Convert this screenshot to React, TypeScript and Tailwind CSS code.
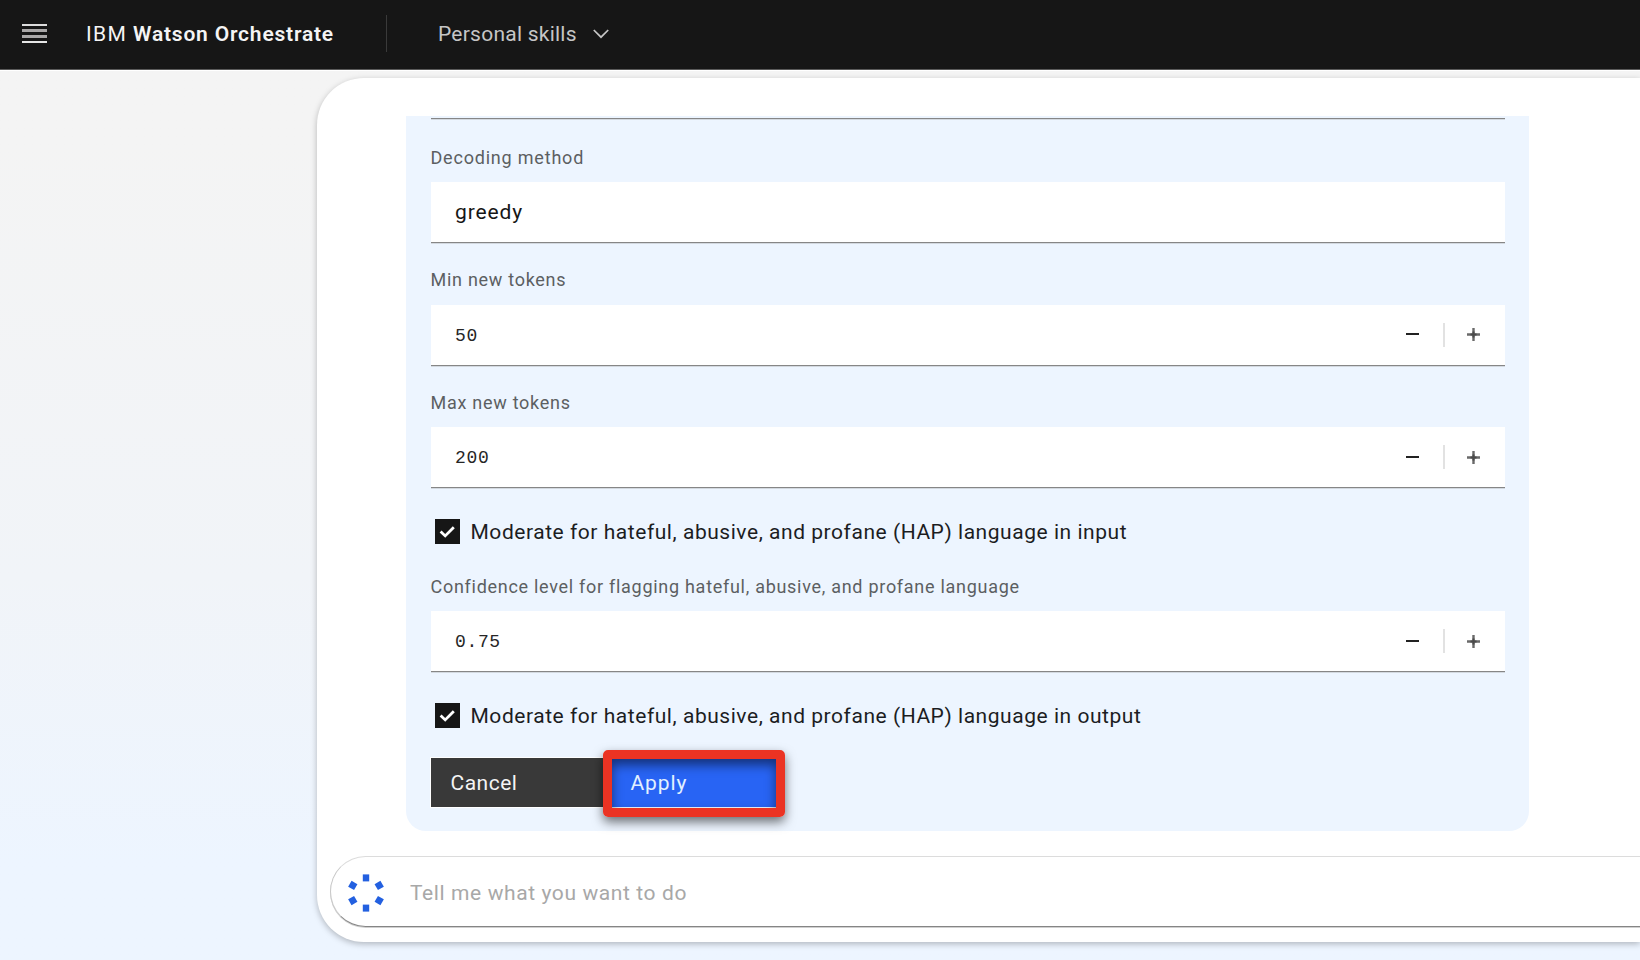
import React from "react";

function Field({
  label,
  spacing,
  children,
}: {
  label: string;
  spacing: string;
  children: React.ReactNode;
}) {
  return (
    <div className="flex h-[122.6px] flex-col">
      <label
        className={`flex flex-1 items-end pb-[12.3px] text-[18px] leading-6 text-[#5c5f62] ${spacing}`}
      >
        {label}
      </label>
      <div className="flex h-[61px] items-center border-b border-[#868686] bg-white pl-[24.5px] shadow-[0_1px_0_#d3d9e0]">
        {children}
      </div>
    </div>
  );
}

function NumberField({ label, spacing, value }: { label: string; spacing: string; value: string }) {
  return (
    <Field label={label} spacing={spacing}>
      <span className="flex-1 pt-[2px] font-['Liberation_Mono',monospace] text-[18px] leading-6 tracking-[0.65px] text-[#262626]">
        {value}
      </span>
      <button className="flex h-full w-[61px] items-center justify-center" aria-label="Decrease">
        <svg width="13" height="13" viewBox="0 0 13 13">
          <path d="M0 6h13" stroke="#222" strokeWidth="2" />
        </svg>
      </button>
      <span className="h-6 w-[2px] bg-[#e2e2e2]" />
      <button className="flex h-full w-[60px] items-center justify-center pr-[2px]" aria-label="Increase">
        <svg width="13" height="13" viewBox="0 0 13 13">
          <path d="M0 6.5h13M6.5 0v13" stroke="#6a6a6a" strokeWidth="2.4" />
          <path d="M3.5 6.5h6M6.5 3.5v6" stroke="#4a4a4a" strokeWidth="2" />
        </svg>
      </button>
    </Field>
  );
}

function CheckRow({ label }: { label: string }) {
  return (
    <div className="flex h-[61.3px] items-end pb-[5.5px] pl-1">
      <div className="flex items-center">
        <span className="flex size-[25px] items-center justify-center bg-[#161616]">
          <svg width="25" height="25" viewBox="0 0 25 25" fill="none">
            <path d="M5.6 12.6l4.6 4.3 8.6-8.6" stroke="#fff" strokeWidth="2.8" />
          </svg>
        </span>
        <span className="ml-[11px] pt-px text-[21px] leading-6 tracking-[0.54px] whitespace-nowrap text-[#1c1d1f]">
          {label}
        </span>
      </div>
    </div>
  );
}

function Header() {
  return (
    <header className="flex h-[70px] shrink-0 items-center border-b border-[#5a5a5a] bg-[#161616] shadow-[0_1px_0_#fff]">
      <button className="ml-[22px] mb-[2px] flex h-[19px] w-[25px] flex-col justify-between" aria-label="Menu">
        <span className="h-[2px] w-full bg-[#dcdcdc]" />
        <span className="h-[3px] w-full bg-[#a9a7a7]" />
        <span className="h-[3px] w-full bg-[#a9a7a7]" />
        <span className="h-[2px] w-full bg-[#e6e6e6]" />
      </button>
      <div className="ml-[39px] flex w-[300px] items-center pb-[2px] text-[21px] leading-6 text-[#f4f4f4]">
        <span className="w-[47px] tracking-[1.3px]">IBM</span>
        <span className="font-semibold tracking-[0.8px]">Watson Orchestrate</span>
      </div>
      <div className="mt-[15px] h-[37px] w-px self-start bg-[#3a3a3a]" />
      <button className="ml-[51px] flex items-center pb-[2px] text-[21px] leading-6 text-[#c6c6c6]">
        <span className="w-[155px] text-left tracking-[0.24px]">Personal skills</span>
        <svg width="16" height="10" viewBox="0 0 16 10" fill="none">
          <path d="M0.8 1l7.2 7.2L15.2 1" stroke="#c6c6c6" strokeWidth="1.7" />
        </svg>
      </button>
    </header>
  );
}

function Prompt() {
  return (
    <div className="mt-[25px] ml-[13px] flex h-[71px] shrink-0 items-center rounded-l-[36px] border-y border-l border-t-[#dcdcdc] border-b-[#858585] border-l-[#c8c8c8] bg-white shadow-[0_1px_0_#d0d0d0]">
      <svg className="mt-[3px] ml-[17px]" width="36" height="38" viewBox="-18 -19 36 38" fill="#2360e0">
        <rect x="-3.2" y="-18.6" width="6.4" height="7" />
        <rect x="-3.2" y="11.6" width="6.4" height="7" />
        <rect x="-3.4" y="-3.4" width="6.8" height="6.8" transform="translate(-13.2 -7.6) rotate(30)" />
        <rect x="-3.4" y="-3.4" width="6.8" height="6.8" transform="translate(13.2 -7.6) rotate(-30)" />
        <rect x="-3.4" y="-3.4" width="6.8" height="6.8" transform="translate(-13.2 7.6) rotate(-30)" />
        <rect x="-3.4" y="-3.4" width="6.8" height="6.8" transform="translate(13.2 7.6) rotate(30)" />
      </svg>
      <span className="ml-[26px] pt-[3px] text-[21px] leading-6 tracking-[0.6px] text-[#a8a8a8]">
        Tell me what you want to do
      </span>
    </div>
  );
}

export default function App() {
  return (
    <div className="flex h-[960px] w-[1640px] flex-col overflow-hidden bg-linear-to-b from-[#f4f4f4] from-15% via-[#f1f4f8] via-60% to-[#edf5ff] to-90% font-['Roboto',sans-serif]">
      <Header />
      <main className="mt-2 ml-[317px] flex h-[864px] flex-col rounded-l-[47px] bg-white pt-[38px] shadow-[0_2px_6px_rgba(0,0,0,0.26)]">
        <section className="ml-[89px] flex h-[715px] w-[1123px] shrink-0 flex-col rounded-b-[20px] bg-[#edf5ff] px-[24.5px]">
          <div className="mb-[1.5px] h-[3px] shrink-0 border-b border-[#868686] shadow-[0_1px_0_#d3d9e0]" />
          <Field label="Decoding method" spacing="tracking-[0.8px]">
            <span className="text-[21px] leading-6 tracking-[0.9px] text-[#161616]">greedy</span>
          </Field>
          <NumberField label="Min new tokens" spacing="tracking-[0.72px]" value="50" />
          <NumberField label="Max new tokens" spacing="tracking-[0.72px]" value="200" />
          <CheckRow label="Moderate for hateful, abusive, and profane (HAP) language in input" />
          <NumberField
            label="Confidence level for flagging hateful, abusive, and profane language"
            spacing="tracking-[0.715px]"
            value="0.75"
          />
          <CheckRow label="Moderate for hateful, abusive, and profane (HAP) language in output" />
          <div className="mt-[25px] flex h-[49px] text-[21px] leading-6">
            <button className="flex w-[177px] items-center bg-[#393939] pl-5 tracking-[0.5px] text-[#f4f4f4] shadow-[0_0_0_1px_#fff]">
              Cancel
            </button>
            <button className="relative flex w-[172px] items-center bg-[#2864f4] pl-[23px] tracking-[0.9px] text-[#e2f1ff]">
              Apply
              <span className="absolute -top-[8px] -left-[5px] h-[67px] w-[182px] rounded-[5px] border-9 border-[#eb3323] shadow-[0_5px_11px_rgba(0,0,0,0.55),inset_0_6px_11px_rgba(0,0,0,0.5)]" />
            </button>
          </div>
        </section>
        <Prompt />
      </main>
    </div>
  );
}
